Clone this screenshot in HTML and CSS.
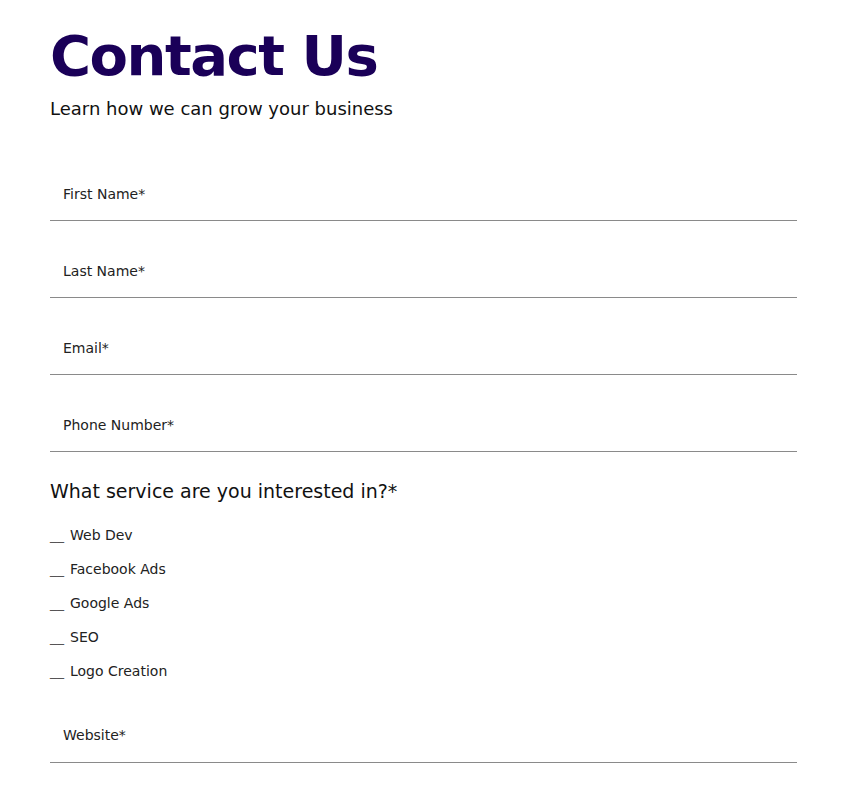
FILE: index.html
```html
<!DOCTYPE html>
<html>
<head>
<meta charset="utf-8">
<link rel="stylesheet" href="styles.css">
</head>
<body>
<main class="page">
  <h1 class="title">Contact Us</h1>
  <p class="subtitle">Learn how we can grow your business</p>
  <form class="form">
    <div class="field"><span class="label">First Name*</span></div>
    <div class="field"><span class="label">Last Name*</span></div>
    <div class="field"><span class="label">Email*</span></div>
    <div class="field"><span class="label">Phone Number*</span></div>
    <h2 class="question">What service are you interested in?*</h2>
    <ul class="options">
      <li class="option"><span class="box">__</span>Web Dev</li>
      <li class="option"><span class="box">__</span>Facebook Ads</li>
      <li class="option"><span class="box">__</span>Google Ads</li>
      <li class="option"><span class="box">__</span>SEO</li>
      <li class="option"><span class="box">__</span>Logo Creation</li>
    </ul>
    <div class="field field-last"><span class="label">Website*</span></div>
  </form>
</main>
</body>
</html>
```

FILE: styles.css
```css
html, body {
  margin: 0;
  padding: 0;
  background: #ffffff;
}
body {
  font-family: "DejaVu Sans", "Open Sans", sans-serif;
  color: #111111;
}
.page {
  width: 747px;
  padding: 0 0 0 50px;
}
.title {
  margin: 0;
  padding-top: 22px;
  font-size: 56px;
  line-height: 68px;
  font-weight: 700;
  color: #1a0058;
  letter-spacing: -1.5px;
}
.subtitle {
  margin: 8px 0 0 0;
  font-size: 18px;
  line-height: 22px;
  color: #111111;
}
.form {
  display: flex;
  flex-direction: column;
  margin-top: 24px;
}
.field {
  height: 77px;
  display: flex;
  align-items: flex-end;
  padding: 0 0 17px 13px;
  box-sizing: border-box;
  border-bottom: 1px solid #8a8a8a;
}
.label {
  font-size: 14px;
  line-height: 18px;
  color: #222222;
}
.question {
  margin: 27px 0 0 0;
  font-size: 19px;
  line-height: 24px;
  font-weight: 400;
  color: #111111;
}
.options {
  list-style: none;
  margin: 23px 0 0 0;
  padding: 0;
  display: flex;
  flex-direction: column;
  gap: 16px;
}
.option {
  font-size: 14px;
  line-height: 18px;
  color: #222222;
  display: flex;
}
.box {
  width: 20px;
  color: #555555;
}
.field-last {
  height: 83px;
  padding-bottom: 18px;
}
```
